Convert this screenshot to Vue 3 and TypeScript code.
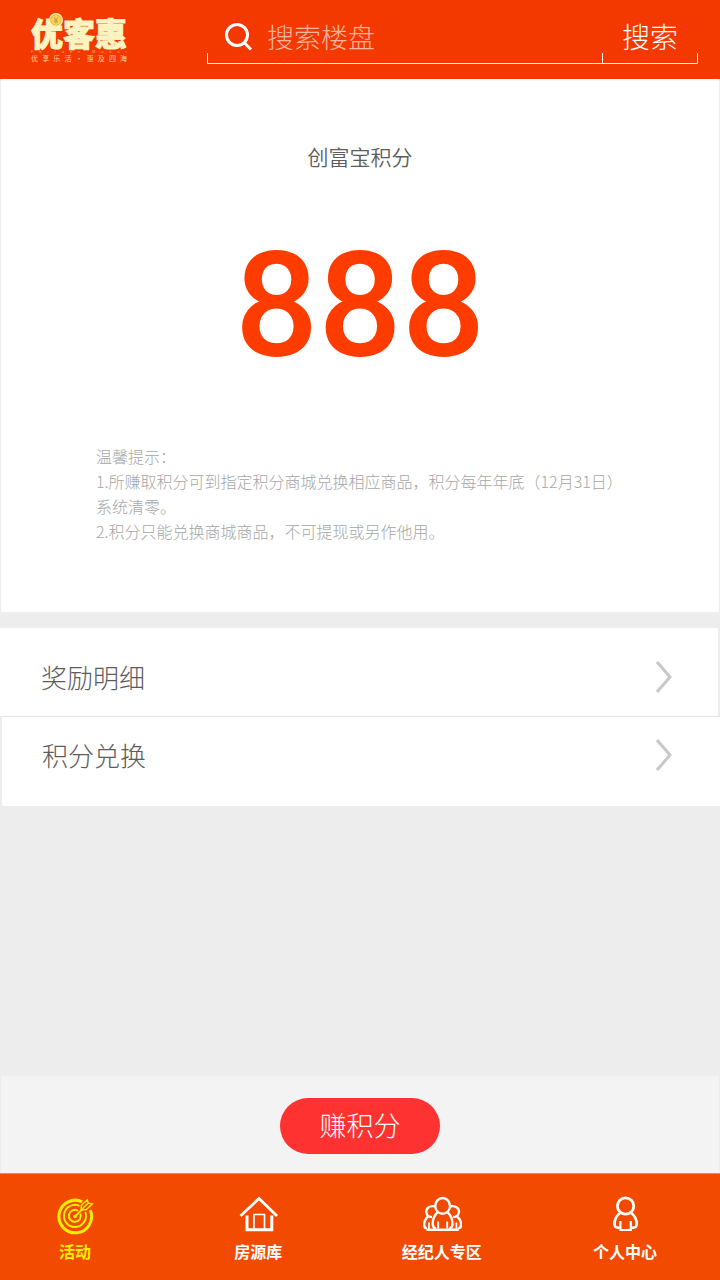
<script setup lang="ts">
import { ref } from 'vue'

type IconName = 'target' | 'house' | 'group' | 'person'

interface Tab {
  label: string
  icon: IconName
}

const keyword = ref('')
const points = 888
const active = ref<IconName>('target')

const tips: string[] = [
  '温馨提示：',
  '1.所赚取积分可到指定积分商城兑换相应商品，积分每年年底（12月31日）',
  '系统清零。',
  '2.积分只能兑换商城商品，不可提现或另作他用。',
]

const entries: string[] = ['奖励明细', '积分兑换']

const tabs: Tab[] = [
  { label: '活动', icon: 'target' },
  { label: '房源库', icon: 'house' },
  { label: '经纪人专区', icon: 'group' },
  { label: '个人中心', icon: 'person' },
]

const latin = [...'Fortune Maker']
const slogan = [...'优享乐活·惠及四海']
</script>

<template>
  <div class="page">
    <header class="top">
      <a class="logo" href="#" aria-label="优客惠">
        <span class="logo-name">优客惠</span>
        <svg class="coin" viewBox="0 0 14 14" aria-hidden="true">
          <circle cx="7" cy="7" r="7" fill="#fbf3bd" />
          <circle cx="7" cy="7" r="5.8" fill="#e9b93c" />
          <circle cx="7" cy="7" r="4.7" fill="#f3d463" />
          <path d="M5 4l2 3 2-3M7 7v3.4M5.2 7.2h3.6M5.2 8.8h3.6" fill="none" stroke="#c98a1c" stroke-width=".7" />
        </svg>
        <span class="logo-latin"><i v-for="(c, i) in latin" :key="i">{{ c }}</i></span>
        <span class="logo-slogan"><i v-for="(c, i) in slogan" :key="i">{{ c }}</i></span>
      </a>
      <form class="search" @submit.prevent>
        <label class="field">
          <svg class="lens" viewBox="0 0 30 30" aria-hidden="true">
            <circle cx="13" cy="13" r="10.5" />
            <path d="M20 20.5L27 27.5" />
          </svg>
          <input v-model="keyword" type="text" placeholder="搜索楼盘" aria-label="搜索楼盘" />
        </label>
        <button class="go" type="submit">搜索</button>
      </form>
    </header>

    <section class="card">
      <h1>创富宝积分</h1>
      <p class="points">{{ points }}</p>
      <div class="tips">
        <p v-for="t in tips" :key="t">{{ t }}</p>
      </div>
    </section>

    <nav class="list">
      <a v-for="e in entries" :key="e" class="row" href="#">
        <span>{{ e }}</span>
        <svg class="chevron" viewBox="0 0 16 32" aria-hidden="true"><path d="M1 1L14 16L1 31" /></svg>
      </a>
    </nav>

    <div class="earn">
      <button type="button">赚积分</button>
    </div>

    <nav class="tabs">
      <a
        v-for="t in tabs"
        :key="t.icon"
        class="tab"
        :class="{ active: active === t.icon }"
        href="#"
        @click.prevent="active = t.icon"
      >
        <svg viewBox="0 0 40 40" aria-hidden="true">
          <g v-if="t.icon === 'target'">
            <path d="M27.2 6.8A16.3 16.3 0 1 0 35.2 15.1" stroke-width="3" />
            <path d="M24.5 10.9A11 11 0 1 0 30.3 17.1" stroke-width="2" />
            <path d="M23 15.8A6 6 0 1 0 25.4 18.7" stroke-width="2" />
            <circle cx="20" cy="21.5" r="1.8" fill="currentColor" stroke="none" />
            <path d="M20 21.5L27 14.5" stroke-width="1.8" />
            <path d="M26.2 14.8L26.2 10.5L32.2 4.8L33.2 8.2L37.2 9L31 14.8ZM27 14L33.2 8.2" stroke-width="1.5" />
          </g>
          <g v-else-if="t.icon === 'house'">
            <path d="M2.5 21L21 3.5L39 21" stroke-width="2.8" />
            <path d="M9 20.5V34.7H33.8V20.5" stroke-width="3" />
            <path d="M16 34V19.5H26.5V34" stroke-width="1.7" />
          </g>
          <g v-else-if="t.icon === 'group'" stroke-width="2.4">
            <ellipse cx="20.6" cy="10.9" rx="7.4" ry="7.9" />
            <path d="M15.5 17.3C12.5 20 10.7 24 10.7 29C10.7 32 11.5 33 14 33.8M25.7 17.3C28.7 20 30.5 24 30.5 29C30.5 32 29.7 33 27.2 33.8" />
            <path d="M16.2 26.5V33.5M25.2 26.5V33.5" stroke-width="1.9" />
            <path d="M13 11.3C7 10.3 4 13.5 4.3 17C4.6 19.8 6.5 22 10 22M28.2 11.3C34.2 10.3 37.2 13.5 36.9 17C36.6 19.8 34.7 22 31.2 22" />
            <path d="M6.2 21.5C3.5 23.5 2.2 26.5 2.2 30C2.2 32.5 3.2 33.3 5 33.3M35 21.5C37.7 23.5 39 26.5 39 30C39 32.5 38 33.3 36.2 33.3" />
            <path d="M7 27.5V34M34.4 27.5V34" stroke-width="1.8" />
            <path d="M4.5 34.8H36.7" stroke-width="2.6" />
          </g>
          <g v-else stroke-width="2.8">
            <ellipse cx="20.6" cy="11" rx="8.2" ry="8.1" />
            <path d="M15 18C11 21 9.5 24.5 9.5 29C9.5 32 10.5 32.8 14.5 32.8M26.2 18C30.2 21 31.7 24.5 31.7 29C31.7 32 30.7 32.8 26.7 32.8" />
            <path d="M15.4 26V35H25.8V26" stroke-width="2.2" />
          </g>
        </svg>
        <span>{{ t.label }}</span>
      </a>
    </nav>
  </div>
</template>

<style>
body {
  margin: 0;
  background: #ededed;
}
</style>

<style scoped>
.page {
  display: flex;
  flex-direction: column;
  min-height: 100vh;
  font-family: "Noto Sans CJK SC", sans-serif;
  font-weight: 300;
  background: #ededed;
  color: #5c5c5c;
}
a {
  color: inherit;
  text-decoration: none;
}
p,
h1 {
  margin: 0;
  font-weight: inherit;
}
button,
input {
  margin: 0;
  padding: 0;
  border: 0;
  background: none;
  font: inherit;
  color: inherit;
}
button {
  cursor: pointer;
}
input {
  outline: none;
}

.top {
  display: flex;
  align-items: flex-start;
  gap: 80px;
  height: 79px;
  padding: 0 22px 0 31px;
  box-sizing: border-box;
  background: #f33900;
  color: #fff;
}
.logo {
  position: relative;
  flex: none;
  display: flex;
  flex-direction: column;
  width: 96px;
  padding-top: 15px;
  color: #fbf3c0;
}
.logo-name {
  font-size: 32px;
  line-height: 34px;
  font-weight: 900;
  white-space: nowrap;
  -webkit-text-stroke: 1px #fbf3c0;
}
.coin {
  position: absolute;
  left: 18px;
  top: 13px;
  width: 14px;
  height: 14px;
}
.logo-latin,
.logo-slogan {
  display: flex;
  justify-content: space-between;
}
.logo i {
  font-style: normal;
}
.logo-latin {
  font-family: "Liberation Sans", sans-serif;
  font-size: 4px;
  line-height: 5px;
  color: #f9b56a;
}
.logo-slogan {
  font-size: 7px;
  line-height: 9px;
  font-weight: 400;
  color: #fbcf96;
}
.search {
  flex: 1;
  display: flex;
  height: 64px;
  border-bottom: 1px solid #fff;
  box-sizing: border-box;
  background:
    linear-gradient(#fff, #fff) left bottom / 1px 10px no-repeat,
    linear-gradient(#fff, #fff) right bottom / 1px 10px no-repeat;
}
.field {
  flex: 1;
  display: flex;
  align-items: center;
  gap: 13px;
  min-width: 0;
  padding: 10px 0 0 17px;
}
.lens {
  flex: none;
  width: 30px;
  height: 30px;
  fill: none;
  stroke: #fff;
  stroke-width: 3;
}
.field input {
  flex: 1;
  min-width: 0;
  font-size: 27px;
  line-height: 40px;
}
.field input::placeholder {
  color: #fbb59c;
  opacity: 1;
}
.go {
  width: 96px;
  padding: 16px 0 8px;
  font-size: 28px;
  line-height: 40px;
  background: linear-gradient(#fff, #fff) left bottom / 1px 10px no-repeat;
}

.card {
  padding: 61px 40px 68px 95px;
  border: solid #ededed;
  border-width: 0 1px;
  background: #fff;
}
h1 {
  margin-right: 55px;
  text-align: center;
  font-size: 21px;
  line-height: 32px;
  font-weight: 350;
}
.points {
  margin: 38px 55px 42px 0;
  text-align: center;
  font-family: Roboto, "Liberation Sans", sans-serif;
  font-weight: 500;
  font-size: 147px;
  line-height: 192px;
  color: #ff3c00;
}
.tips {
  font-size: 16px;
  line-height: 25px;
  color: #a6a6a6;
}

.list {
  margin-top: 16px;
}
.row {
  display: flex;
  justify-content: space-between;
  align-items: center;
  padding: 29px 46px 20px 41px;
  border-right: 2px solid #ededed;
  background: #fff;
  font-size: 26px;
  line-height: 40px;
}
.row + .row {
  padding: 18px 48px 31px 40px;
  border: solid #ededed;
  border-width: 0 0 0 2px;
  box-shadow: 0 -1px #e2e2e2;
}
.chevron {
  width: 16px;
  height: 32px;
  fill: none;
  stroke: #c8c8c8;
  stroke-width: 3;
}

.earn {
  display: flex;
  justify-content: center;
  margin-top: auto;
  padding: 22px 0 19px;
  background: #f3f3f3;
  border: solid #ededed;
  border-width: 0 1px;
}
.earn button {
  width: 160px;
  height: 56px;
  padding-bottom: 2px;
  border-radius: 28px;
  background: #ff3232;
  color: #fff;
  font-size: 27px;
  line-height: 40px;
}

.tabs {
  display: flex;
  justify-content: space-between;
  padding: 21px 53px 17px 33px;
  border-top: 1px solid #f0845a;
  background: #f24a00;
  color: #fff;
}
.tab {
  display: flex;
  flex-direction: column;
  align-items: center;
  gap: 4px;
  width: 84px;
  font-size: 16px;
  line-height: 24px;
  font-weight: 700;
  white-space: nowrap;
}
.tab.active {
  color: #ffee00;
}
.tab svg {
  width: 40px;
  height: 40px;
  fill: none;
  stroke: currentColor;
}
</style>
